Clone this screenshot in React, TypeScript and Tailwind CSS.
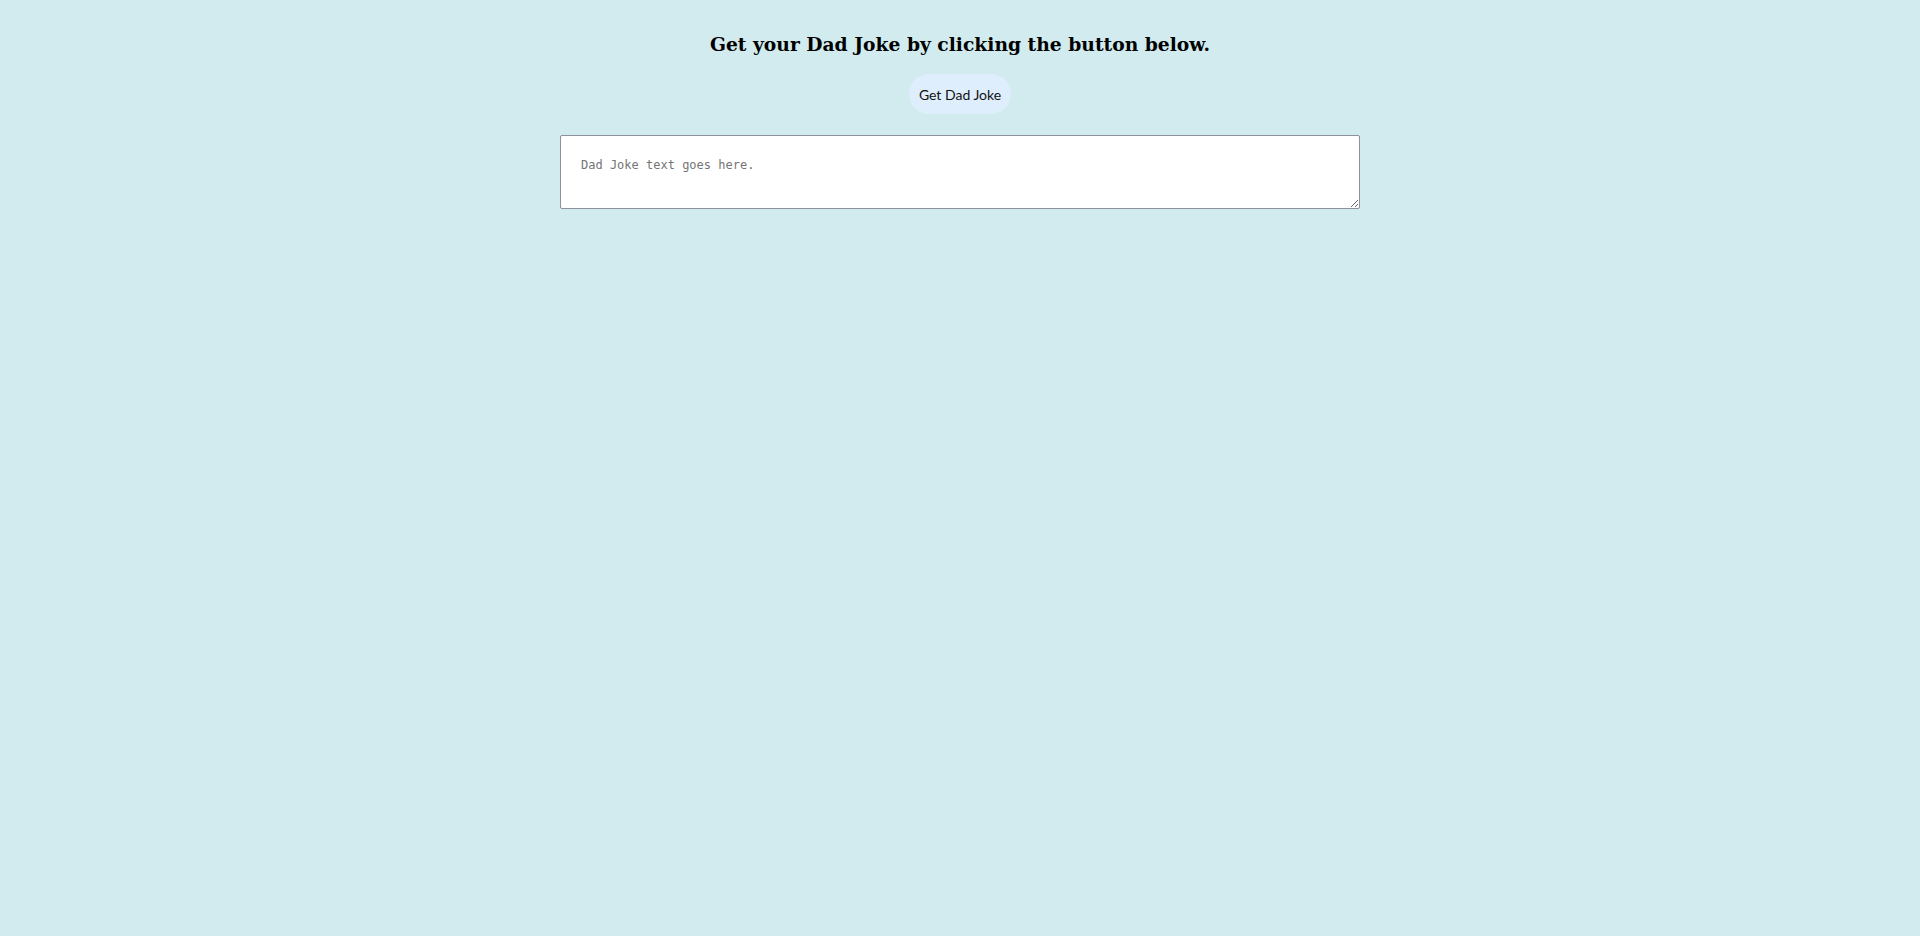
import React from "react";

export default function App() {
  return (
    <div className="min-h-[936px] w-full bg-[#d1ebee] flex flex-col items-center pt-[32px]">
      <h1 className="text-[18.72px] leading-[24px] font-bold text-black [font-family:'DejaVu_Serif',serif]">
        Get your Dad Joke by clicking the button below.
      </h1>
      <button className="mt-[18px] h-[40px] w-[102px] rounded-full bg-[#dfeefd] text-[14px] text-[#111] [font-family:'Lato',sans-serif]">
        Get Dad Joke
      </button>
      <textarea
        placeholder="Dad Joke text goes here."
        className="mt-[21px] w-[800px] h-[74px] border border-[#8f8f9d] rounded-[2px] bg-white px-[20px] pt-[21px] text-[12px] leading-[16px] [font-family:'DejaVu_Sans_Mono',monospace] placeholder:text-[#757575] outline-none"
      />
    </div>
  );
}
